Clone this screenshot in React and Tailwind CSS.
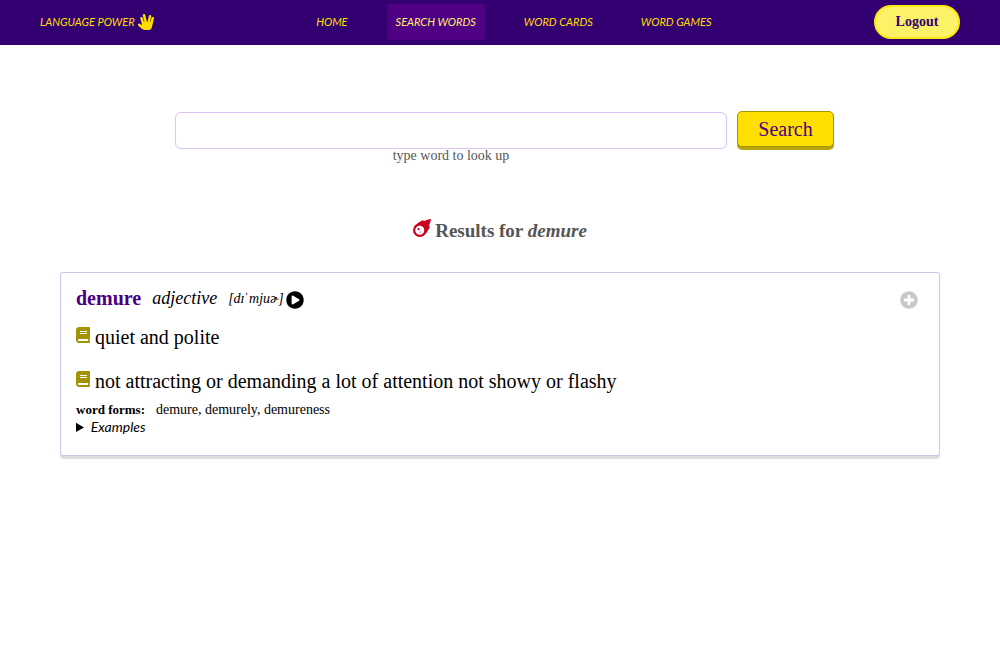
import { FaBook, FaHandSpock, FaMeteor, FaPlayCircle, FaPlusCircle } from "react-icons/fa";

const links = [
  { label: "HOME", href: "#home" },
  { label: "SEARCH WORDS", href: "#search", active: true },
  { label: "WORD CARDS", href: "#cards" },
  { label: "WORD GAMES", href: "#games" },
];

const definitions = [
  "quiet and polite",
  "not attracting or demanding a lot of attention not showy or flashy",
];

function Header() {
  return (
    <header className="flex h-[45px] items-center justify-between bg-[#330072] px-10 pb-[2px] font-['Lato',sans-serif] text-[11px] italic leading-4 text-[#ffdf00]">
      <a href="#home" className="flex items-center gap-[3px] whitespace-nowrap">
        LANGUAGE POWER
        <FaHandSpock className="size-4" aria-hidden="true" />
      </a>
      <nav className="flex gap-[30px]">
        {links.map(({ label, href, active }) => (
          <a
            key={label}
            href={href}
            aria-current={active ? "page" : undefined}
            className={
              active
                ? "rounded-[3px] bg-[#4f0084] px-[9px] py-[10px] whitespace-nowrap text-[#fbf267]"
                : "px-[9px] py-[10px] whitespace-nowrap"
            }
          >
            {label}
          </a>
        ))}
      </nav>
      <button
        type="button"
        className="h-[34px] w-[86px] rounded-full border-2 border-[#fde910] bg-[#fbf267] font-['Liberation_Serif',serif] text-[14px] font-bold not-italic text-[#330072]"
      >
        Logout
      </button>
    </header>
  );
}

function SearchForm() {
  return (
    <form className="flex items-start gap-[10px] pr-[16.6%] pl-[17.5%]" onSubmit={(e) => e.preventDefault()}>
      <div className="flex flex-1 flex-col pt-px">
        <input
          id="word"
          type="text"
          className="h-[37px] w-full rounded-md border border-[#dcc2f5] px-3 text-[18px] outline-none"
        />
        <label htmlFor="word" className="text-center text-[14px] leading-[14px] text-[#555555]">
          type word to look up
        </label>
      </div>
      <button
        type="submit"
        className="h-9 w-[97px] rounded-[5px] border border-[#a39300] bg-[#ffdf00] text-[20px] leading-8 text-[#4b0082] shadow-[0_3px_0_#b8a40c]"
      >
        Search
      </button>
    </form>
  );
}

function WordCard() {
  return (
    <div className="mx-[6%] mt-[27px] rounded-[4px] bg-[#dedede] pb-[3px]">
      <article className="rounded-[3px] border border-[#d1c4e4] bg-white px-[15px] pt-[9px] pb-[19px]">
        <div className="flex items-center justify-between pr-[6px]">
          <div className="flex h-8 items-center">
            <h3 className="text-[20px] font-bold text-[#4b0082]">demure</h3>
            <span className="ml-[11px] text-[18px] italic">adjective</span>
            <span className="ml-[11px] text-[14px] italic">[dɪˈmjuɚ]</span>
            <button type="button" aria-label="Play pronunciation" className="ml-[2px] pt-1">
              <FaPlayCircle className="size-[18px]" />
            </button>
          </div>
          <button type="button" aria-label="Add word" className="pt-1 text-[#c8c8c8]">
            <FaPlusCircle className="size-[18px]" />
          </button>
        </div>
        <ul className="mt-[9px] flex flex-col gap-4">
          {definitions.map((text) => (
            <li key={text} className="flex items-start gap-[5px] text-[20px] leading-7">
              <FaBook className="mt-1 h-4 w-[14px] shrink-0 text-[#a39300]" aria-hidden="true" />
              {text}
            </li>
          ))}
        </ul>
        <p className="mt-[6px] text-[14px] leading-[17px]">
          <b className="mr-[11px] text-[13px]">word forms:</b>
          demure, demurely, demureness
        </p>
        <details>
          <summary className="font-['Lato',sans-serif] text-[14px] italic leading-[18px]">Examples</summary>
          <p className="text-[14px] leading-5">She was demure and reserved.</p>
        </details>
      </article>
    </div>
  );
}

export default function App() {
  return (
    <div className="font-['Liberation_Serif',serif] text-black">
      <Header />
      <main className="pt-[66px]">
        <SearchForm />
        <h2 className="mt-[54px] flex items-start justify-center gap-1 text-[19px] font-bold leading-7 text-[#555555]">
          <FaMeteor className="mt-[2px] size-[18px] text-[#cc0022]" aria-hidden="true" />
          <span>
            Results for <em>demure</em>
          </span>
        </h2>
        <WordCard />
      </main>
    </div>
  );
}
